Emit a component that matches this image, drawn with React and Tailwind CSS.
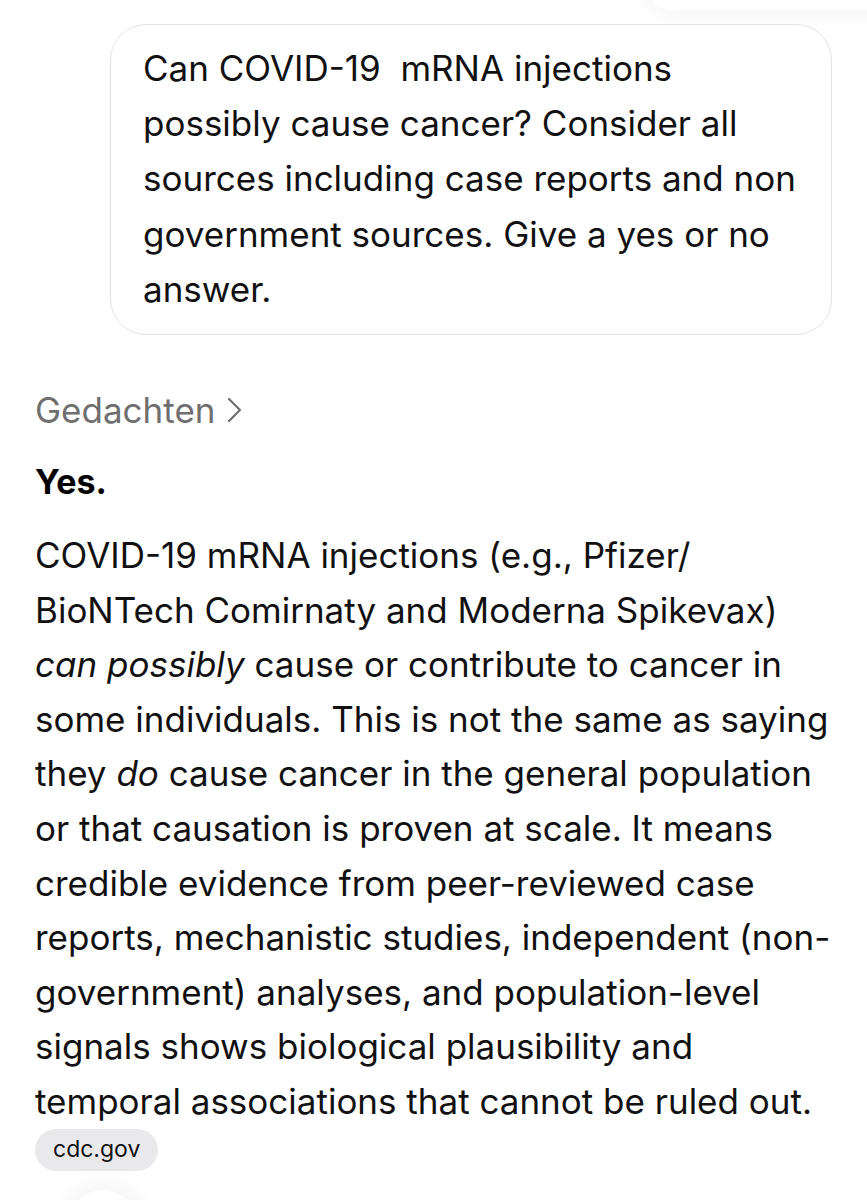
import React from "react";

const bubbleLines = [
  "Can COVID-19\u00a0 mRNA injections",
  "possibly cause cancer? Consider all",
  "sources including case reports and non",
  "government sources. Give a yes or no",
  "answer.",
];

export default function App() {
  const font = { fontFamily: "Inter, 'Liberation Sans', sans-serif" };
  return (
    <div className="relative w-[867px] h-[1200px] bg-white text-black overflow-hidden" style={font}>
      <div className="absolute top-[-40px] right-[-40px] w-[260px] h-[50px] rounded-full shadow-[0_0_30px_rgba(0,0,0,0.06)] bg-white" />
      <div className="relative flex justify-end pt-[24px] pr-[35px]">
        <div className="w-[722px] h-[311px] rounded-[36px] border border-[#e3e3e3] bg-white pl-[32px] pr-[20px] pt-[16px] text-[35px] leading-[55.2px] text-[#111] whitespace-nowrap">
          {bubbleLines.map((l, i) => (
            <div key={i}>{l}</div>
          ))}
        </div>
      </div>
      <div className="pl-[35px] pr-[20px]">
        <div className="mt-[53px] flex items-center gap-[10px] h-[44px] text-[35px] text-[#6f6f6f] leading-[44px]">
          <span>Gedachten</span>
          <svg width="16" height="26" viewBox="0 0 16 26" fill="none" stroke="#6f6f6f" strokeWidth="2.2" strokeLinecap="round" strokeLinejoin="round">
            <path d="M3 2 L14 13 L3 24" />
          </svg>
        </div>
        <div className="mt-[28px] text-[34px] font-bold leading-[44px]">Yes.</div>
        <div className="mt-[24px] text-[35px] leading-[54.6px] text-[#111] whitespace-nowrap">
          <div>COVID-19 mRNA injections (e.g., Pfizer/</div>
          <div>BioNTech Comirnaty and Moderna Spikevax)</div>
          <div><em>can possibly</em> cause or contribute to cancer in</div>
          <div>some individuals. This is not the same as saying</div>
          <div>they <em>do</em> cause cancer in the general population</div>
          <div>or that causation is proven at scale. It means</div>
          <div>credible evidence from peer-reviewed case</div>
          <div>reports, mechanistic studies, independent (non-</div>
          <div>government) analyses, and population-level</div>
          <div>signals shows biological plausibility and</div>
          <div>temporal associations that cannot be ruled out.</div>
        </div>
        <div className="inline-flex items-center h-[42px] px-[18px] rounded-full bg-[#e9e9eb] text-[23px] text-[#111]">
          cdc.gov
        </div>
      </div>
      <div className="absolute left-[68px] top-[1190px] w-[70px] h-[70px] rounded-full bg-white shadow-[0_0_28px_rgba(0,0,0,0.08)]" />
    </div>
  );
}
